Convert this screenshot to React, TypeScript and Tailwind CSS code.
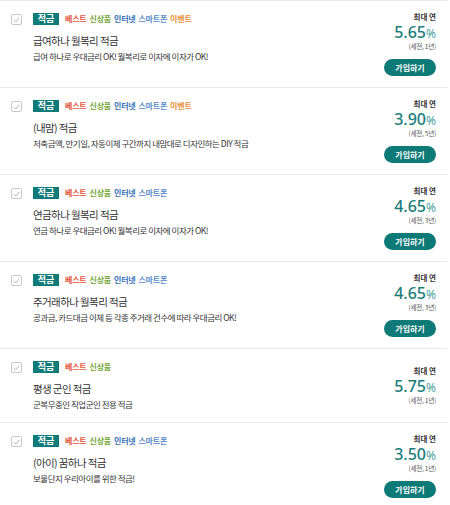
import React from "react";

type Product = {
  title: string;
  desc: string;
  rate: string;
  term: string;
  tags: string[];
  join: boolean;
};

const products: Product[] = [
  { title: "급여하나 월복리 적금", desc: "급여 하나로 우대금리 OK! 월복리로 이자에 이자가 OK!", rate: "5.65", term: "(세전, 1년)", tags: ["베스트", "신상품", "인터넷", "스마트폰", "이벤트"], join: true },
  { title: "(내맘) 적금", desc: "저축금액, 만기일, 자동이체 구간까지 내맘대로 디자인하는 DIY 적금", rate: "3.90", term: "(세전, 5년)", tags: ["베스트", "신상품", "인터넷", "스마트폰", "이벤트"], join: true },
  { title: "연금하나 월복리 적금", desc: "연금 하나로 우대금리 OK! 월복리로 이자에 이자가 OK!", rate: "4.65", term: "(세전, 3년)", tags: ["베스트", "신상품", "인터넷", "스마트폰"], join: true },
  { title: "주거래하나 월복리 적금", desc: "공과금, 카드대금 이체 등 각종 주거래 건수에 따라 우대금리 OK!", rate: "4.65", term: "(세전, 3년)", tags: ["베스트", "신상품", "인터넷", "스마트폰"], join: true },
  { title: "평생 군인 적금", desc: "군복무중인 직업군인 전용 적금", rate: "5.75", term: "(세전, 1년)", tags: ["베스트", "신상품"], join: false },
  { title: "(아이) 꿈하나 적금", desc: "보물단지 우리아이를 위한 적금!", rate: "3.50", term: "(세전, 1년)", tags: ["베스트", "신상품", "인터넷", "스마트폰"], join: true },
];

const tagColor: Record<string, string> = {
  베스트: "text-[#e2553b]",
  신상품: "text-[#74a63a]",
  인터넷: "text-[#3b74bb]",
  스마트폰: "text-[#5a8cc9]",
  이벤트: "text-[#e8913a]",
};

function CheckBox() {
  return (
    <div className="w-[11px] h-[11px] border border-[#c8c8c8] rounded-[2px] flex items-center justify-center bg-white">
      <svg width="7" height="6" viewBox="0 0 7 6" fill="none">
        <path d="M0.8 3 L2.8 5 L6.2 0.8" stroke="#b5b5b5" strokeWidth="1" />
      </svg>
    </div>
  );
}

export default function App() {
  return (
    <div
      className="w-[450px] bg-white text-[#333]"
      style={{ fontFamily: "'Noto Sans CJK KR', 'Noto Sans', sans-serif" }}
    >
      <ul className="w-[447px] border-t border-[#e8e8e8]">
        {products.map((p) => (
          <li key={p.title} className="flex items-center border-b border-[#e8e8e8] pt-[10px] pb-[11px] pr-[11px]">
            <div className="self-start flex flex-1 pt-[2px]">
              <div className="pl-[11px] pt-[1px] w-[33px]">
                <CheckBox />
              </div>
              <div className="flex flex-col">
                <div className="flex items-center gap-[6px] h-[12px]">
                  <span className="bg-[#0f7b78] text-white text-[9px] font-bold leading-[12px] h-[12px] w-[26px] text-center">적금</span>
                  <div className="flex gap-[3px] text-[8px] font-semibold leading-[12px] tracking-[-0.2px]">
                    {p.tags.map((t) => (
                      <span key={t} className={tagColor[t]}>{t}</span>
                    ))}
                  </div>
                </div>
                <div className="text-[10.5px] leading-[16px] h-[16px] mt-[8px] text-[#333] tracking-[-0.6px]">{p.title}</div>
                <div className="text-[8.5px] leading-[13px] h-[13px] mt-[1px] text-[#333] tracking-[-0.5px]">{p.desc}</div>
              </div>
            </div>
            <div className="flex flex-col items-end">
              <div className="text-[7.5px] font-bold leading-[12px] h-[12px] text-[#333]">최대 연</div>
              <div
                className="flex items-baseline h-[18px] pt-[1px] text-[#1a7d7a]"
                style={{ fontFamily: "'Noto Sans', sans-serif" }}
              >
                <span className="inline-block h-[16px] text-[16px] font-medium leading-[16px]">{p.rate}</span>
                <span className="inline-block h-[12px] text-[12px] leading-[12px] text-[#4aa09c]">%</span>
              </div>
              <div className="text-[6.5px] leading-[10px] h-[10px] text-[#555] tracking-[-0.2px]">{p.term}</div>
              {p.join && (
                <button className="mt-[8px] w-[52px] h-[17px] rounded-full bg-[#0e7a77] text-white text-[8px] font-bold leading-[17px]">
                  가입하기
                </button>
              )}
            </div>
          </li>
        ))}
      </ul>
    </div>
  );
}
